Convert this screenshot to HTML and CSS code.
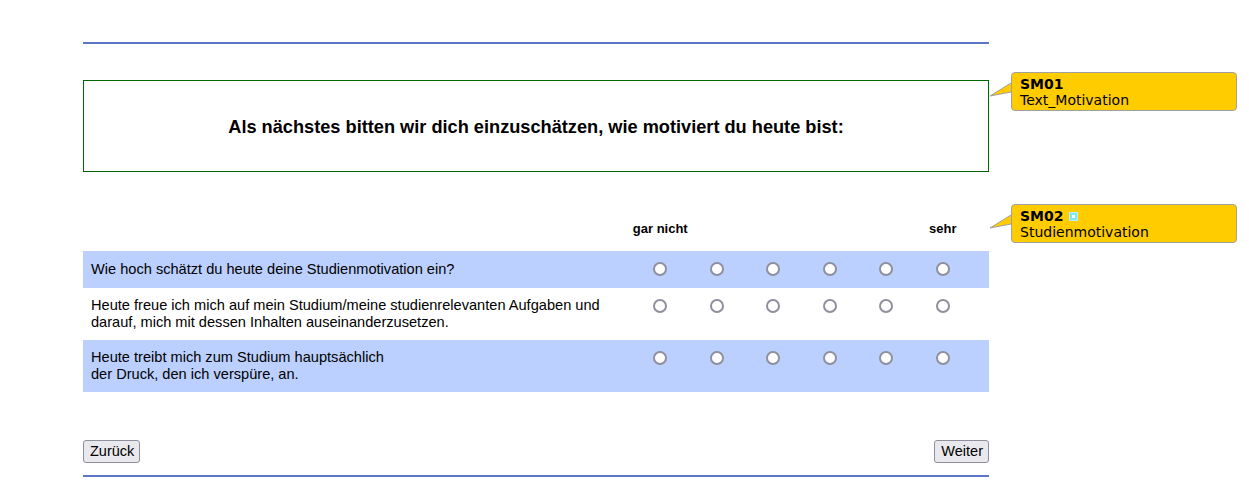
FILE: index.html
```html
<!DOCTYPE html>
<html lang="de">
<head>
<meta charset="utf-8">
<title>Fragebogen</title>
<link rel="stylesheet" href="styles.css">
</head>
<body>
<div class="page">
  <div class="rule"></div>

  <div class="block block-text">
    <div class="textbox">Als nächstes bitten wir dich einzuschätzen, wie motiviert du heute bist:</div>
    <div class="tip">
      <svg class="tip-arrow" width="23" height="16" viewBox="0 0 23 16"><path d="M22 2 L1 15 L22 11" fill="#ffcc00" stroke="#a0a0a0" stroke-width="1"/></svg>
      <div class="tip-id">SM01</div>
      <div class="tip-name">Text_Motivation</div>
    </div>
  </div>

  <div class="block block-scale">
    <div class="scale">
      <div class="srow head">
        <div class="item"></div>
        <div class="opt lbl">gar nicht</div>
        <div class="opt"></div>
        <div class="opt"></div>
        <div class="opt"></div>
        <div class="opt"></div>
        <div class="opt lbl">sehr</div>
        <div class="pad"></div>
      </div>
      <div class="srow shade">
        <div class="item">Wie hoch schätzt du heute deine Studienmotivation ein?</div>
        <div class="opt"><span class="radio"></span></div>
        <div class="opt"><span class="radio"></span></div>
        <div class="opt"><span class="radio"></span></div>
        <div class="opt"><span class="radio"></span></div>
        <div class="opt"><span class="radio"></span></div>
        <div class="opt"><span class="radio"></span></div>
        <div class="pad"></div>
      </div>
      <div class="srow">
        <div class="item">Heute freue ich mich auf mein Studium/meine studienrelevanten Aufgaben und darauf, mich mit dessen Inhalten auseinanderzusetzen.</div>
        <div class="opt"><span class="radio"></span></div>
        <div class="opt"><span class="radio"></span></div>
        <div class="opt"><span class="radio"></span></div>
        <div class="opt"><span class="radio"></span></div>
        <div class="opt"><span class="radio"></span></div>
        <div class="opt"><span class="radio"></span></div>
        <div class="pad"></div>
      </div>
      <div class="srow shade">
        <div class="item">Heute treibt mich zum Studium hauptsächlich<br>der Druck, den ich verspüre, an.</div>
        <div class="opt"><span class="radio"></span></div>
        <div class="opt"><span class="radio"></span></div>
        <div class="opt"><span class="radio"></span></div>
        <div class="opt"><span class="radio"></span></div>
        <div class="opt"><span class="radio"></span></div>
        <div class="opt"><span class="radio"></span></div>
        <div class="pad"></div>
      </div>
    </div>
    <div class="tip">
      <svg class="tip-arrow" width="23" height="16" viewBox="0 0 23 16"><path d="M22 2 L1 15 L22 11" fill="#ffcc00" stroke="#a0a0a0" stroke-width="1"/></svg>
      <div class="tip-id">SM02 <span class="tip-icon"></span></div>
      <div class="tip-name">Studienmotivation</div>
    </div>
  </div>

  <div class="nav">
    <button class="btn">Zurück</button>
    <button class="btn">Weiter</button>
  </div>

  <div class="rule"></div>
</div>
</body>
</html>
```

FILE: styles.css
```css
html, body {
  margin: 0;
  padding: 0;
  background: #ffffff;
}

body {
  font-family: "Liberation Sans", Arial, sans-serif;
  color: #000000;
}

.page {
  width: 906px;
  margin-left: 83px;
  padding-top: 42px;
}

.rule {
  height: 2px;
  background: #5b76c4;
}

.block {
  position: relative;
}

.block-text {
  margin-top: 36px;
}

.textbox {
  border: 1px solid #006600;
  display: flex;
  align-items: center;
  justify-content: center;
  font-size: 18.2px;
  font-weight: bold;
  padding-top: 3px;
  height: 87px;
}

.block-scale {
  margin-top: 40px;
}

.scale {
  display: flex;
  flex-direction: column;
}

.srow {
  display: grid;
  grid-template-columns: 549px repeat(6, 56.5px) 1fr;
  align-items: start;
  font-size: 14.6px;
  line-height: 17px;
}

.srow.head {
  height: 39px;
}

.srow.shade {
  background: #bbd0fe;
}

.item {
  padding: 9px 8px;
  min-height: 19px;
  display: flex;
  align-items: center;
}

.srow.head .item {
  padding: 0;
  min-height: 0;
}

.opt {
  display: flex;
  justify-content: center;
  padding-top: 11px;
}

.srow.head .opt {
  padding-top: 0;
}

.srow.head .lbl {
  font-size: 13px;
  font-weight: bold;
  padding-top: 8px;
  white-space: nowrap;
}

.radio {
  width: 14px;
  height: 14px;
  box-sizing: border-box;
  border: 2px solid #8f8f9d;
  border-radius: 50%;
  background: #ffffff;
}

.nav {
  display: flex;
  justify-content: space-between;
  margin-top: 48px;
  margin-bottom: 12px;
}

.btn {
  font-family: "Liberation Sans", Arial, sans-serif;
  font-size: 14.5px;
  line-height: 16px;
  color: #000000;
  background: #e9e9ed;
  border: 1px solid #8f8f9d;
  border-radius: 3px;
  padding: 1px 5px 2px 6px;
  height: 23px;
  margin: 0;
}

.tip {
  position: absolute;
  left: 928px;
  top: -8px;
  width: 226px;
  height: 39px;
  box-sizing: border-box;
  background: #ffcc00;
  border: 1px solid #a0a0a0;
  border-radius: 4px;
  padding: 3px 0 0 8px;
  font-family: "DejaVu Sans", Verdana, sans-serif;
  font-size: 14px;
  line-height: 16px;
  color: #000000;
}

.tip-arrow {
  position: absolute;
  left: -23px;
  top: 8px;
}

.tip-id {
  font-weight: bold;
  display: flex;
  align-items: center;
  gap: 6px;
}

.tip-icon {
  display: inline-block;
  width: 7px;
  height: 7px;
  box-sizing: border-box;
  border: 2px solid #7fe8f0;
  background: #ffffff;
  outline: 1px solid #b8f2f6;
}
```
